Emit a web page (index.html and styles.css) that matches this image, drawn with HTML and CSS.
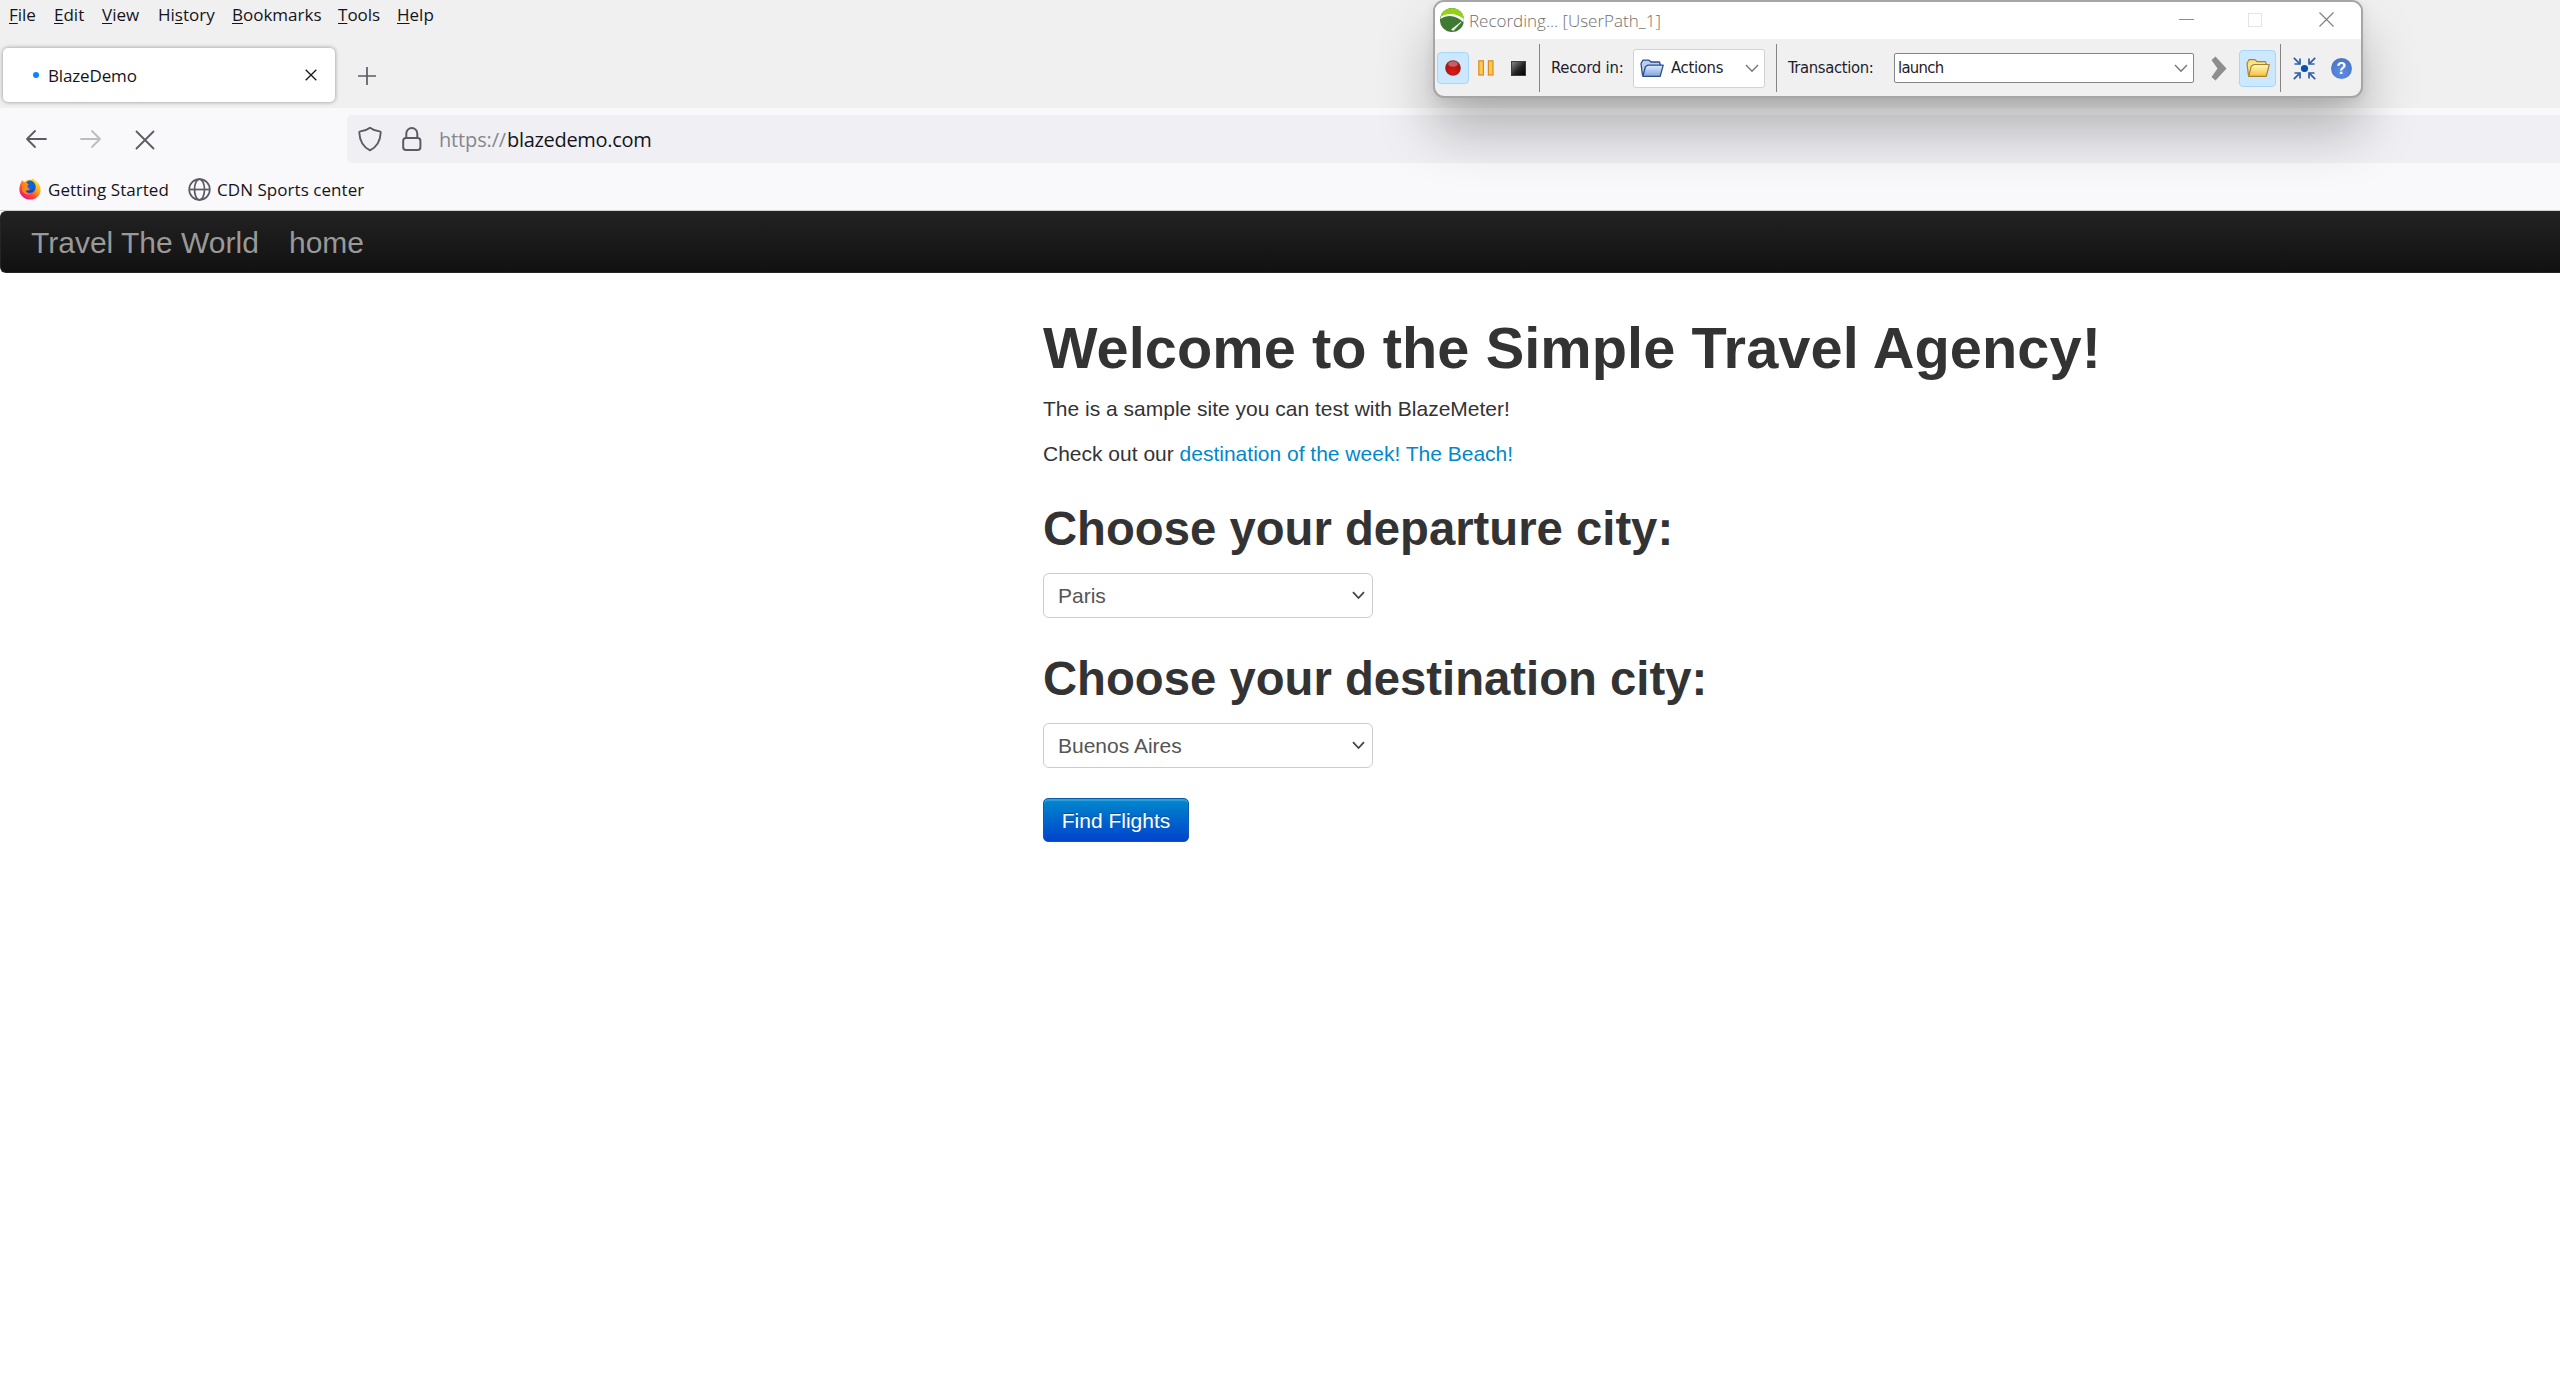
FILE: index.html
```html
<!DOCTYPE html>
<html lang="en">
<head>
<meta charset="utf-8">
<title>BlazeDemo</title>
<link rel="stylesheet" href="styles.css">
</head>
<body>
<header class="chrome">
  <nav class="menubar">
    <span><u>F</u>ile</span><span><u>E</u>dit</span><span><u>V</u>iew</span><span>Hi<u>s</u>tory</span><span><u>B</u>ookmarks</span><span><u>T</u>ools</span><span><u>H</u>elp</span>
  </nav>
  <div class="tabs">
    <div class="tab">
      <i class="loading"></i>
      <span class="tab-title">BlazeDemo</span>
      <svg class="tab-close" width="12" height="12" viewBox="0 0 12 12"><path d="M.7.7l10.6 10.6M11.3.7L.7 11.3" stroke="#15141a" stroke-width="1.3" fill="none"/></svg>
    </div>
    <svg class="new-tab" width="18" height="18" viewBox="0 0 18 18"><path d="M9 .5v17M.5 9h17" stroke="#5b5b66" stroke-width="1.7" stroke-linecap="round"/></svg>
  </div>
  <div class="toolbar">
    <svg class="back" width="22" height="20" viewBox="0 0 22 20"><path d="M10 2L2 10l8 8M2 10h19" fill="none" stroke="#5b5b66" stroke-width="1.8" stroke-linecap="round" stroke-linejoin="round"/></svg>
    <svg class="forward" width="22" height="20" viewBox="0 0 22 20"><path d="M12 2l8 8-8 8M20 10H1" fill="none" stroke="#bcbcc2" stroke-width="1.8" stroke-linecap="round" stroke-linejoin="round"/></svg>
    <svg class="stop" width="20" height="20" viewBox="0 0 20 20"><path d="M1.500 1.500l17 17M18.500 1.500l-17 17" fill="none" stroke="#5b5b66" stroke-width="1.800" stroke-linecap="round"/></svg>
    <div class="urlbar">
      <svg class="shield" width="24" height="26" viewBox="0 0 24 26"><path d="M12 1.800C9.500 3.800 5.500 5 2.400 5.400 1.500 5.500 1.200 6 1.300 6.800 1.700 14.500 5 21 12 24.300 19 21 22.300 14.500 22.700 6.800 22.800 6 22.500 5.500 21.600 5.400 18.500 5 14.500 3.800 12 1.800z" fill="none" stroke="#5b5b66" stroke-width="1.900" stroke-linejoin="round"/></svg>
      <svg class="lock" width="20" height="26" viewBox="0 0 20 26"><rect x="1.200" y="12" width="17.200" height="12" rx="2.800" fill="none" stroke="#5b5b66" stroke-width="2"/><path d="M4.300 12V7.500a5.500 5.500 0 0 1 11 0V12" fill="none" stroke="#5b5b66" stroke-width="2"/></svg>
      <span class="url"><span class="scheme">https://</span><span class="host">blazedemo.com</span></span>
    </div>
  </div>
  <div class="bookmarks">
    <svg class="fox" width="22" height="22" viewBox="0 0 22 22">
      <defs>
        <linearGradient id="fire" x1=".85" y1=".05" x2=".2" y2=".9"><stop offset="0" stop-color="#fff04a"/><stop offset=".4" stop-color="#ffa21c"/><stop offset=".7" stop-color="#ff4a33"/><stop offset="1" stop-color="#f0147c"/></linearGradient>
      </defs>
      <path d="M3.200 2.200C4 3.200 5 3.700 6 3.800 8 1.500 11 1.600 12 2L14 .3C15 2.500 20 4 21.300 9 23 16 18 21.600 11 21.600 5 21.600.4 17 .4 11.500.4 7.500 1.800 4.500 3.200 2.200z" fill="url(#fire)"/>
      <path d="M7.500 4.200C10 1 14.500 2.500 16 6c1.800 4.200.2 9-5 9-3 0-4.800-2-4.500-4 1.500 1 3 .7 4.500-.6-1.500-.8-3-1-3.800-2.400C8.500 7.500 9.300 7.300 9.800 6.500 8.500 6 7.800 5.200 7.500 4.200z" fill="#0a63d8"/>
      <path d="M8 12c2 1.600 5 1.300 6.500-1.800C15 14 11 15.500 8 13.500z" fill="#3d2c9c"/>
      <path d="M3.200 6.500c2-.8 4 .2 5.800 2.100l-1.500 1.900c.6.700 2 1.100 3.500.2-1 2-3.500 2.300-5 1.300.5 2.500 3 4.200 6 3.500-3 2-8 .5-9-3.500z" fill="#ff8a1d"/>
    </svg>
    <span class="bm1">Getting Started</span>
    <svg class="globe" width="23" height="23" viewBox="0 0 23 23"><g fill="none" stroke="#5b5b66" stroke-width="1.700"><circle cx="11.500" cy="11.500" r="10.300"/><ellipse cx="11.500" cy="11.500" rx="5" ry="10.300"/><path d="M1.200 11.500h20.600"/></g></svg>
    <span class="bm2">CDN Sports center</span>
  </div>
</header>

<div class="navbar"><span class="brand">Travel The World</span><span class="home">home</span></div>

<main class="container">
  <h1>Welcome to the Simple Travel Agency!</h1>
  <p>The is a sample site you can test with BlazeMeter!</p>
  <p>Check out our <a>destination of the week! The Beach!</a></p>
  <h2>Choose your departure city:</h2>
  <div class="select"><span>Paris</span><svg width="13" height="9" viewBox="0 0 13 9"><path d="M1 1.200l5.500 5.800 5.500-5.800" fill="none" stroke="#444" stroke-width="1.800"/></svg></div>
  <h2 class="second">Choose your destination city:</h2>
  <div class="select"><span>Buenos Aires</span><svg width="13" height="9" viewBox="0 0 13 9"><path d="M1 1.200l5.500 5.800 5.500-5.800" fill="none" stroke="#444" stroke-width="1.800"/></svg></div>
  <div class="button">Find Flights</div>
</main>

<section class="recorder">
  <div class="titlebar">
    <svg class="logo" width="24" height="24" viewBox="0 0 24 24"><circle cx="12" cy="12" r="12" fill="#3f7a34"/><path d="M.2 11A12 12 0 0 1 23.900 10.500L23.600 14.500C17 7.500 8 6 .2 11z" fill="#fff"/><path d="M.4 9A12 12 0 0 1 23.600 9.200L23.800 11C16 4.500 7 4.800.4 9z" fill="#97d210"/><path d="M11.500 21.500l9.500-7.300-7.700 8.300z" fill="#f2f7ee" stroke="#f2f7ee" stroke-width=".8"/></svg>
    <span class="title">Recording... [UserPath_1]</span>
    <svg class="min" width="15" height="15" viewBox="0 0 15 15"><path d="M0 7.500h15" stroke="#8d8d8d" stroke-width="1"/></svg>
    <svg class="max" width="14" height="14" viewBox="0 0 14 14"><rect x=".5" y=".5" width="13" height="13" fill="none" stroke="#e4e4e4"/></svg>
    <svg class="close" width="15" height="15" viewBox="0 0 15 15"><path d="M.5.5l14 14M14.500.5l-14 14" stroke="#808080" stroke-width="1.200"/></svg>
  </div>
  <div class="controls">
    <div class="toggle rec"><svg width="16" height="16" viewBox="0 0 16 16"><defs><radialGradient id="red" cx=".5" cy=".75" r=".75"><stop offset="0" stop-color="#e01818"/><stop offset=".6" stop-color="#b01515"/><stop offset="1" stop-color="#8c2a2c"/></radialGradient></defs><circle cx="8" cy="8" r="7.800" fill="url(#red)"/><ellipse cx="8" cy="4" rx="4.700" ry="2.700" fill="#d98484" opacity=".65"/></svg></div>
    <svg class="pause" width="16" height="16" viewBox="0 0 16 16"><g fill="#ffcb45" stroke="#d88a28" stroke-width="1.200"><rect x=".8" y=".8" width="4.600" height="14.200"/><rect x="10.400" y=".8" width="4.600" height="14.200"/></g></svg>
    <svg class="halt" width="15" height="15" viewBox="0 0 15 15"><defs><linearGradient id="ink" x1="0" y1="0" x2="1" y2="1"><stop offset="0" stop-color="#8a8a8a"/><stop offset=".55" stop-color="#222"/><stop offset="1" stop-color="#000"/></linearGradient></defs><rect x=".5" y=".5" width="14" height="14" fill="url(#ink)" stroke="#3c3c3c"/></svg>
    <i class="sep s1"></i>
    <span class="label l1">Record in:</span>
    <div class="combo actions">
      <svg width="24" height="20" viewBox="0 0 24 20"><defs><linearGradient id="blue" x1="0" y1="0" x2="0" y2="1"><stop offset="0" stop-color="#dfeafb"/><stop offset="1" stop-color="#7fa4e0"/></linearGradient></defs><path d="M2.500 17.500L1 5.500 3 2.200h6l2 1.800h8.500l1 3.500" fill="#b9cff2" stroke="#2c4d86" stroke-width="1.300" stroke-linejoin="round"/><path d="M2.800 18.300L5.500 8.500 8 7.200h15.200l-3 11.100z" fill="url(#blue)" stroke="#2c4d86" stroke-width="1.300" stroke-linejoin="round"/></svg>
      <span class="label">Actions</span>
      <svg class="caret" width="14" height="9" viewBox="0 0 14 9"><path d="M1 1l6 6.300L13 1" fill="none" stroke="#777" stroke-width="1.400"/></svg>
    </div>
    <i class="sep s2"></i>
    <span class="label l2">Transaction:</span>
    <div class="combo launch"><span class="label">launch</span><svg class="caret" width="14" height="9" viewBox="0 0 14 9"><path d="M1 1l6 6.300L13 1" fill="none" stroke="#777" stroke-width="1.400"/></svg></div>
    <svg class="next" width="16" height="25" viewBox="0 0 16 25"><path d="M.5 4L4.500.5 15.500 12.500 4.500 24.500.5 21 6.500 12.500z" fill="#8e8e8e"/></svg>
    <div class="toggle open"><svg width="24" height="20" viewBox="0 0 24 20"><defs><linearGradient id="gold" x1="0" y1="0" x2="0" y2="1"><stop offset="0" stop-color="#fff9c4"/><stop offset="1" stop-color="#f2c03c"/></linearGradient></defs><path d="M2.500 17.500L1 5.500 3 1.700h6l2 2h8.500l1 3" fill="#fbe38a" stroke="#a9822c" stroke-width="1.200" stroke-linejoin="round"/><path d="M2.600 18.300L5.200 8.300 8 6.500h15.300l-3 11.800z" fill="url(#gold)" stroke="#a9822c" stroke-width="1.200" stroke-linejoin="round"/></svg></div>
    <i class="sep s3"></i>
    <svg class="shrink" width="23" height="23" viewBox="0 0 23 23"><circle cx="11.500" cy="11.500" r="3.600" fill="#0b50b0"/><g fill="none" stroke="#2b5fae" stroke-width="1.700"><path d="M.8.800l5.800 5.800M22.200.800l-5.800 5.800M.8 22.200l5.800-5.800M22.200 22.200l-5.800-5.800"/><path d="M1.500 7h5.500V1.500M21.500 7H16V1.500M1.500 16H7v5.500M21.500 16H16v5.500"/></g></svg>
    <div class="help">?</div>
  </div>
</section>
</body>
</html>
```
FILE: styles.css
```css
* { box-sizing: border-box; }
body { margin: 0; height: 1400px; overflow: hidden; position: relative; background: #fff; font-family: "Liberation Sans", Arial, sans-serif; }
svg { display: block; flex: none; }
span { white-space: nowrap; }

.chrome { font: 17px/24px "Open Sans", "Noto Sans", sans-serif; color: #15141a; background: #f9f9fb; }
.menubar { height: 40px; padding: 3px 0 0 9px; background: #f0f0f0; display: grid; grid-template-columns: 45px 48px 56px 74px 106px 59px 60px; letter-spacing: 0; }
.menubar u { text-decoration-thickness: 1px; text-underline-offset: 2px; }
.tabs { height: 68px; background: #f0f0f0; display: flex; align-items: flex-start; padding: 8px 0 0 3px; }
.tab { width: 332px; height: 54px; border-radius: 5px; background: #fff; box-shadow: 0 0 4px rgba(0,0,0,.4); display: flex; align-items: center; padding-left: 30px; }
.loading { width: 6px; height: 6px; border-radius: 50%; background: #0a84ff; margin-right: 9px; flex: none; }
.tab-title { width: 257px; padding-top: 2px; letter-spacing: -0.15px; }
.new-tab { margin: 19px 0 0 23px; }
.toolbar { height: 60px; display: flex; align-items: center; padding: 2px 0 0 25px; }
.forward { margin-left: 33px; }
.stop { margin: 2px 0 0 33px; }
.urlbar { flex: 1; height: 48px; margin: 0 0 1px 192px; border-radius: 5px 0 0 5px; background: #f0f0f4; display: flex; align-items: center; padding-left: 11px; }
.lock { margin-left: 20px; }
.url { font-size: 20px; margin: 2px 0 0 17px; letter-spacing: -0.3px; }
.scheme { color: #86868c; display: inline-block; width: 68px; letter-spacing: -0.15px; }
.bookmarks { height: 43px; border-bottom: 1px solid #ccd0d0; display: flex; align-items: center; padding-left: 19px; }
.bm1 { margin-left: 7px; width: 140px; padding-top: 1px; letter-spacing: 0.05px; }
.bm2 { margin-left: 6px; padding-top: 1px; letter-spacing: 0.05px; }

.navbar { height: 62px; border-radius: 6px 0 0 6px; border: 1px solid #252525; border-right: 0; background: linear-gradient(#222, #111); color: #999; font-size: 30px; line-height: 61px; display: flex; padding-left: 30px; }
.brand { width: 258px; }

.container { width: 1410px; margin-left: 1043px; padding-top: 45px; color: #333; font-size: 21px; line-height: 30px; }
h1, h2, p { margin: 0; white-space: nowrap; }
h1 { font-size: 57.75px; line-height: 60px; margin-bottom: 16px; letter-spacing: 0.06px; }
p { margin-bottom: 15px; }
a { color: #0088cc; }
h2 { font-size: 47.25px; line-height: 60px; margin: 30px 0 14px; }
h2.second { margin-top: 31px; }
.select { width: 330px; height: 45px; border: 1px solid #ccc; border-radius: 6px; color: #555; display: flex; align-items: center; justify-content: space-between; padding: 0 7px 0 14px; }
.button { width: 146px; height: 44px; margin-top: 30px; border-radius: 5px; border: 1px solid #0a5bb0; background: linear-gradient(#0088cc, #0044cc); box-shadow: inset 0 2px 1px rgba(255,255,255,.2); color: #fff; text-shadow: 0 -1px 0 rgba(0,0,0,.25); text-align: center; line-height: 44px; }

.recorder { position: absolute; left: 1433px; top: 0; width: 930px; height: 98px; border: 2px solid #a6a6a6; border-radius: 11px; background: #f0f0f0; box-shadow: 0 34px 54px rgba(0,0,0,.25), 0 3px 12px rgba(0,0,0,.08); }
.titlebar { height: 37px; background: #fff; border-radius: 9px 9px 0 0; display: flex; align-items: center; padding: 0 0 2px 5px; font: 17px/24px "Open Sans", "Noto Sans", sans-serif; color: #707070; }
.title { margin: 2px 0 0 5px; width: 710px; letter-spacing: 0; font-weight: 300; }
.max { margin-left: 54px; }
.close { margin-left: 57px; }
.controls { height: 57px; display: flex; align-items: center; padding: 1px 0 0 2px; }
.toggle { display: flex; align-items: center; justify-content: center; background: #cce8ff; border: 1px solid #a8d6fa; border-radius: 4px; flex: none; }
.rec { width: 32px; height: 32px; }
.pause { margin-left: 9px; }
.halt { margin-left: 17px; }
.sep { width: 1px; height: 48px; background: #858585; flex: none; }
.s1 { margin-left: 13px; }
.label { font: 16.5px/20px "DejaVu Sans Condensed", "DejaVu Sans", sans-serif; font-stretch: condensed; letter-spacing: -0.7px; color: #1d1d2c; }
.l1 { margin-left: 11px; width: 82px; letter-spacing: -0.2px; }
.combo { background: #fff; display: flex; align-items: center; flex: none; }
.actions { width: 132px; height: 39px; border: 1px solid #d2d2d2; border-radius: 3px; padding-left: 6px; }
.actions .label { margin-left: 7px; width: 74px; letter-spacing: -0.3px; }
.s2 { margin-left: 11px; }
.l2 { margin-left: 11px; width: 106px; letter-spacing: -0.35px; }
.launch { width: 300px; height: 30px; border: 1px solid #858585; border-radius: 2px; padding: 0 5px 0 3px; justify-content: space-between; }
.next { margin-left: 17px; }
.open { margin-left: 12px; width: 37px; height: 37px; }
.s3 { margin-left: 4px; }
.shrink { margin-left: 12px; }
.help { margin-left: 15px; width: 21px; height: 21px; border-radius: 50%; background: radial-gradient(circle at 50% 70%, #5b8ce4, #4670bd); color: #fff; font: bold 16px/21px "Liberation Sans", Arial, sans-serif; text-align: center; flex: none; }
```
